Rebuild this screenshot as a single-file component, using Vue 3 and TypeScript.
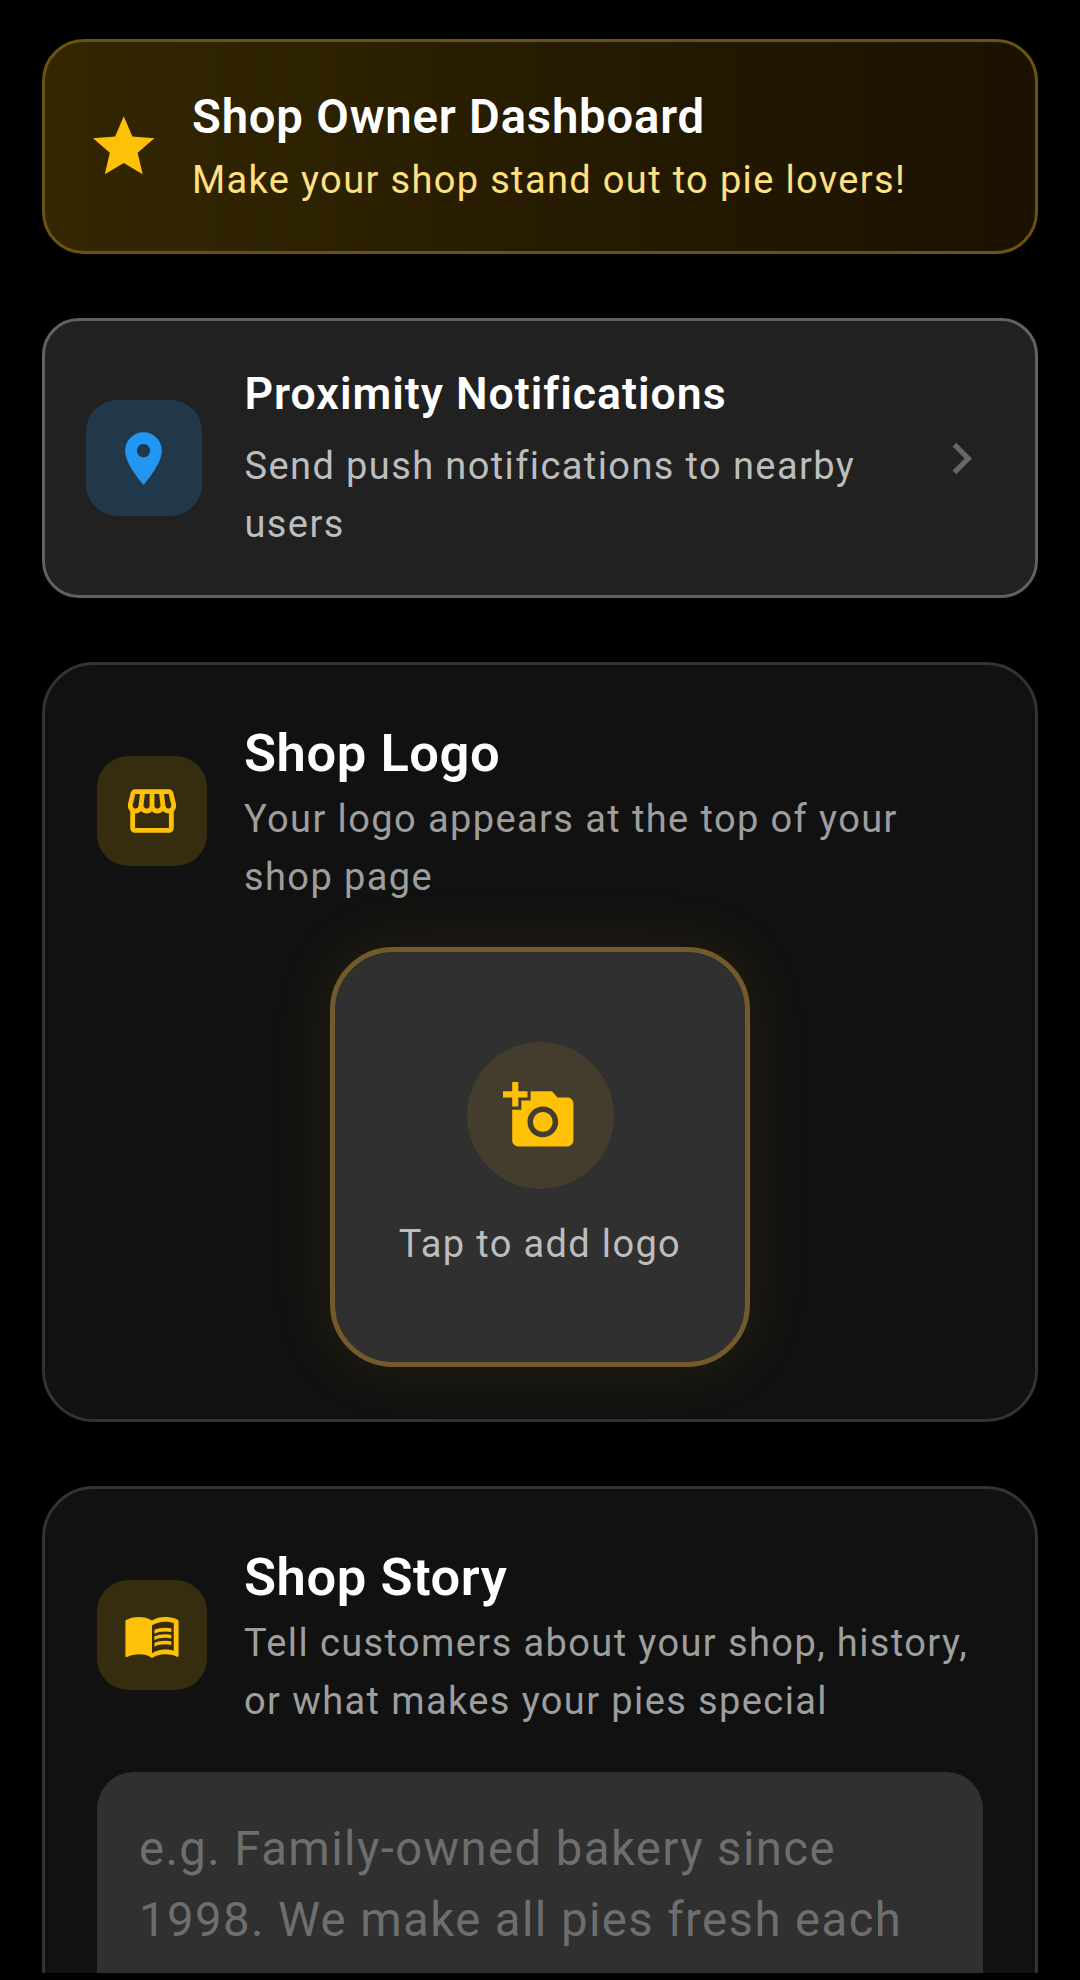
<template>
  <div class="page">
    <div class="banner">
      <svg class="star" viewBox="0 0 24 24"><path d="M12 17.27L18.18 21l-1.64-7.03L22 9.24l-7.19-.61L12 2 9.19 8.63 2 9.24l5.46 4.73L5.82 21z" /></svg>
      <div>
        <div class="banner-title">Shop Owner Dashboard</div>
        <div class="banner-sub">Make your shop stand out to pie lovers!</div>
      </div>
    </div>

    <div class="notify">
      <div class="notify-icon">
        <svg viewBox="0 0 24 24"><path d="M12 2C8.13 2 5 5.13 5 9c0 5.25 7 13 7 13s7-7.75 7-13c0-3.87-3.13-7-7-7zm0 9.5c-1.38 0-2.5-1.12-2.5-2.5s1.12-2.5 2.5-2.5 2.5 1.12 2.5 2.5-1.12 2.5-2.5 2.5z" /></svg>
      </div>
      <div class="notify-text">
        <div class="notify-title">Proximity Notifications</div>
        <div class="notify-desc">Send push notifications to nearby users</div>
      </div>
      <svg class="chevron" viewBox="0 0 24 24"><path d="M10 6L8.59 7.41 13.17 12l-4.58 4.59L10 18l6-6z" /></svg>
    </div>

    <section class="card">
      <div class="card-head">
        <div class="card-icon">
          <svg viewBox="0 0 24 24"><path d="M21.9 8.89l-1.05-4.37c-.22-.9-1-1.52-1.91-1.52H5.05c-.9 0-1.69.63-1.9 1.52L2.1 8.89c-.24 1.02-.02 2.06.62 2.88.08.11.19.19.28.29V19c0 1.1.9 2 2 2h14c1.1 0 2-.9 2-2v-6.94c.09-.09.2-.18.28-.28.64-.82.87-1.87.62-2.89zm-2.99-3.9l1.05 4.37c.1.42.01.84-.25 1.17-.14.18-.44.47-.94.47-.61 0-1.14-.49-1.21-1.14L16.98 5l1.93-.01zM13 5h1.96l.54 4.52c.05.39-.07.78-.33 1.07-.22.26-.54.41-.95.41-.67 0-1.22-.59-1.22-1.31V5zM8.49 9.52L9.04 5H11v4.69c0 .72-.55 1.31-1.29 1.31-.34 0-.65-.15-.89-.41-.25-.29-.37-.68-.33-1.07zm-4.45-.16L5.05 5h1.97l-.58 4.86c-.08.65-.6 1.14-1.21 1.14-.49 0-.8-.29-.93-.47-.27-.32-.36-.75-.26-1.17zM5 19v-6.03c.08.01.15.03.23.03.87 0 1.66-.36 2.24-.95.6.6 1.4.95 2.31.95.87 0 1.65-.36 2.23-.93.59.57 1.39.93 2.29.93.84 0 1.64-.35 2.24-.95.58.59 1.37.95 2.24.95.08 0 .15-.02.23-.03V19H5z" /></svg>
        </div>
        <div>
          <div class="card-title">Shop Logo</div>
          <div class="card-desc">Your logo appears at the top of your shop page</div>
        </div>
      </div>
      <div class="logo-box">
        <div class="logo-circle">
          <svg viewBox="0 0 24 24"><path d="M3 4V1h2v3h3v2H5v3H3V6H0V4h3zm3 6V7h3V4h7l1.83 2H21c1.1 0 2 .9 2 2v12c0 1.1-.9 2-2 2H5c-1.1 0-2-.9-2-2V10h3zm7 9c2.76 0 5-2.24 5-5s-2.24-5-5-5-5 2.24-5 5 2.24 5 5 5zm-3.2-5c0 1.77 1.43 3.2 3.2 3.2s3.2-1.43 3.2-3.2-1.43-3.2-3.2-3.2-3.2 1.43-3.2 3.2z" /></svg>
        </div>
        <div class="logo-label">Tap to add logo</div>
      </div>
    </section>

    <section class="card">
      <div class="card-head">
        <div class="card-icon">
          <svg viewBox="0 0 24 24"><path d="M21 5c-1.11-.35-2.33-.5-3.5-.5-1.95 0-4.05.4-5.5 1.5-1.45-1.1-3.55-1.5-5.5-1.5S2.45 4.9 1 6v14.65c0 .25.25.5.5.5.1 0 .15-.05.25-.05C3.1 20.45 5.05 20 6.5 20c1.95 0 4.05.4 5.5 1.5 1.35-.85 3.8-1.5 5.5-1.5 1.65 0 3.35.3 4.75 1.05.1.05.15.05.25.05.25 0 .5-.25.5-.5V6c-.6-.45-1.25-.75-2-1zm0 13.5c-1.1-.35-2.3-.5-3.5-.5-1.7 0-4.15.65-5.5 1.5V8c1.35-.85 3.8-1.5 5.5-1.5 1.2 0 2.4.15 3.5.5v11.5z" /><path d="M17.5 10.5c.88 0 1.73.09 2.5.26V9.24c-.79-.15-1.64-.24-2.5-.24-1.7 0-3.24.29-4.5.83v1.66c1.13-.64 2.7-.99 4.5-.99zM13 12.49v1.66c1.13-.64 2.7-.99 4.5-.99.88 0 1.73.09 2.5.26V11.9c-.79-.15-1.64-.24-2.5-.24-1.7 0-3.24.3-4.5.83zM17.5 14.33c-1.7 0-3.24.29-4.5.83v1.66c1.13-.64 2.7-.99 4.5-.99.88 0 1.73.09 2.5.26v-1.52c-.79-.16-1.64-.24-2.5-.24z" /></svg>
        </div>
        <div>
          <div class="card-title">Shop Story</div>
          <div class="card-desc">Tell customers about your shop, history, or what makes your pies special</div>
        </div>
      </div>
      <div class="story-box">e.g. Family-owned bakery since 1998. We make all pies fresh each</div>
    </section>
  </div>
</template>

<script setup lang="ts">
</script>

<style>
html, body {
  background: #000;
}
</style>

<style scoped>
.page {
  height: 1973px;
  overflow: hidden;
  box-sizing: border-box;
  padding: 39px 42px 0;
  display: flex;
  flex-direction: column;
  gap: 64px;
  background: #000;
  font-family: Roboto, sans-serif;
  color: #fff;
}

.banner {
  flex: none;
  height: 215px;
  box-sizing: border-box;
  display: flex;
  align-items: center;
  gap: 31.5px;
  padding: 0 42px;
  border: 3px solid #6b5210;
  border-radius: 42px;
  background: linear-gradient(90deg, #332701, #1a1100);
}
.star {
  width: 73.5px;
  height: 73.5px;
  flex: none;
  fill: #ffc107;
}
.banner-title {
  font-size: 47.25px;
  font-weight: 600;
  line-height: 62px;
  letter-spacing: 0.8px;
  margin-bottom: 5px;
}
.banner-sub {
  font-size: 38px;
  line-height: 55px;
  letter-spacing: 1.35px;
  color: #ffe082;
}

.notify {
  flex: none;
  height: 280px;
  box-sizing: border-box;
  display: flex;
  align-items: center;
  gap: 43px;
  padding: 0 42px 0 41px;
  border: 3px solid #616161;
  border-radius: 37px;
  background: #212121;
}
.notify-icon {
  width: 115.5px;
  height: 115.5px;
  flex: none;
  display: flex;
  align-items: center;
  justify-content: center;
  border-radius: 31.5px;
  background: #21384b;
}
.notify-icon svg {
  width: 63px;
  height: 63px;
  fill: #2196f3;
}
.notify-text {
  flex: 1;
}
.notify-title {
  font-size: 44.6px;
  font-weight: 600;
  line-height: 60px;
  letter-spacing: 1px;
  margin-bottom: 13px;
}
.notify-desc {
  font-size: 38px;
  line-height: 58px;
  letter-spacing: 1.4px;
  color: #bdbdbd;
}
.chevron {
  width: 63px;
  height: 63px;
  flex: none;
  fill: #666;
}

.card {
  flex: none;
  box-sizing: border-box;
  padding: 52px;
  border: 3px solid #333;
  border-radius: 52px;
  background: #111;
}
.card-head {
  display: flex;
  align-items: center;
  gap: 37px;
}
.card-icon {
  width: 110px;
  height: 110px;
  flex: none;
  display: flex;
  align-items: center;
  justify-content: center;
  margin-bottom: 1px;
  border-radius: 31.5px;
  background: #362c10;
}
.card-icon svg {
  width: 58px;
  height: 58px;
  fill: #ffc107;
}
.card-title {
  font-size: 52.5px;
  font-weight: 600;
  line-height: 73px;
  letter-spacing: 0.55px;
}
.card-desc {
  font-size: 38px;
  line-height: 58px;
  letter-spacing: 1.4px;
  color: #9e9e9e;
}

.logo-box {
  width: 420px;
  height: 420px;
  box-sizing: border-box;
  margin: 41px auto 0;
  display: flex;
  flex-direction: column;
  align-items: center;
  justify-content: center;
  gap: 28px;
  border: 5.25px solid #725a2a;
  border-radius: 63px;
  background: #303030;
  box-shadow: 0 0 60px 8px rgba(255, 193, 7, 0.07);
}
.logo-circle {
  width: 147px;
  height: 147px;
  display: flex;
  align-items: center;
  justify-content: center;
  border-radius: 50%;
  background: #443c2c;
}
.logo-circle svg {
  width: 73.5px;
  height: 73.5px;
  fill: #ffc107;
}
.logo-label {
  font-size: 38px;
  line-height: 55px;
  letter-spacing: 1.35px;
  color: #bdbdbd;
}

.story-box {
  height: 400px;
  box-sizing: border-box;
  margin-top: 42px;
  padding: 42px;
  border-radius: 37px;
  background: #303030;
  font-size: 47.25px;
  line-height: 71px;
  letter-spacing: 1.43px;
  color: #6e6e6e;
}
</style>
